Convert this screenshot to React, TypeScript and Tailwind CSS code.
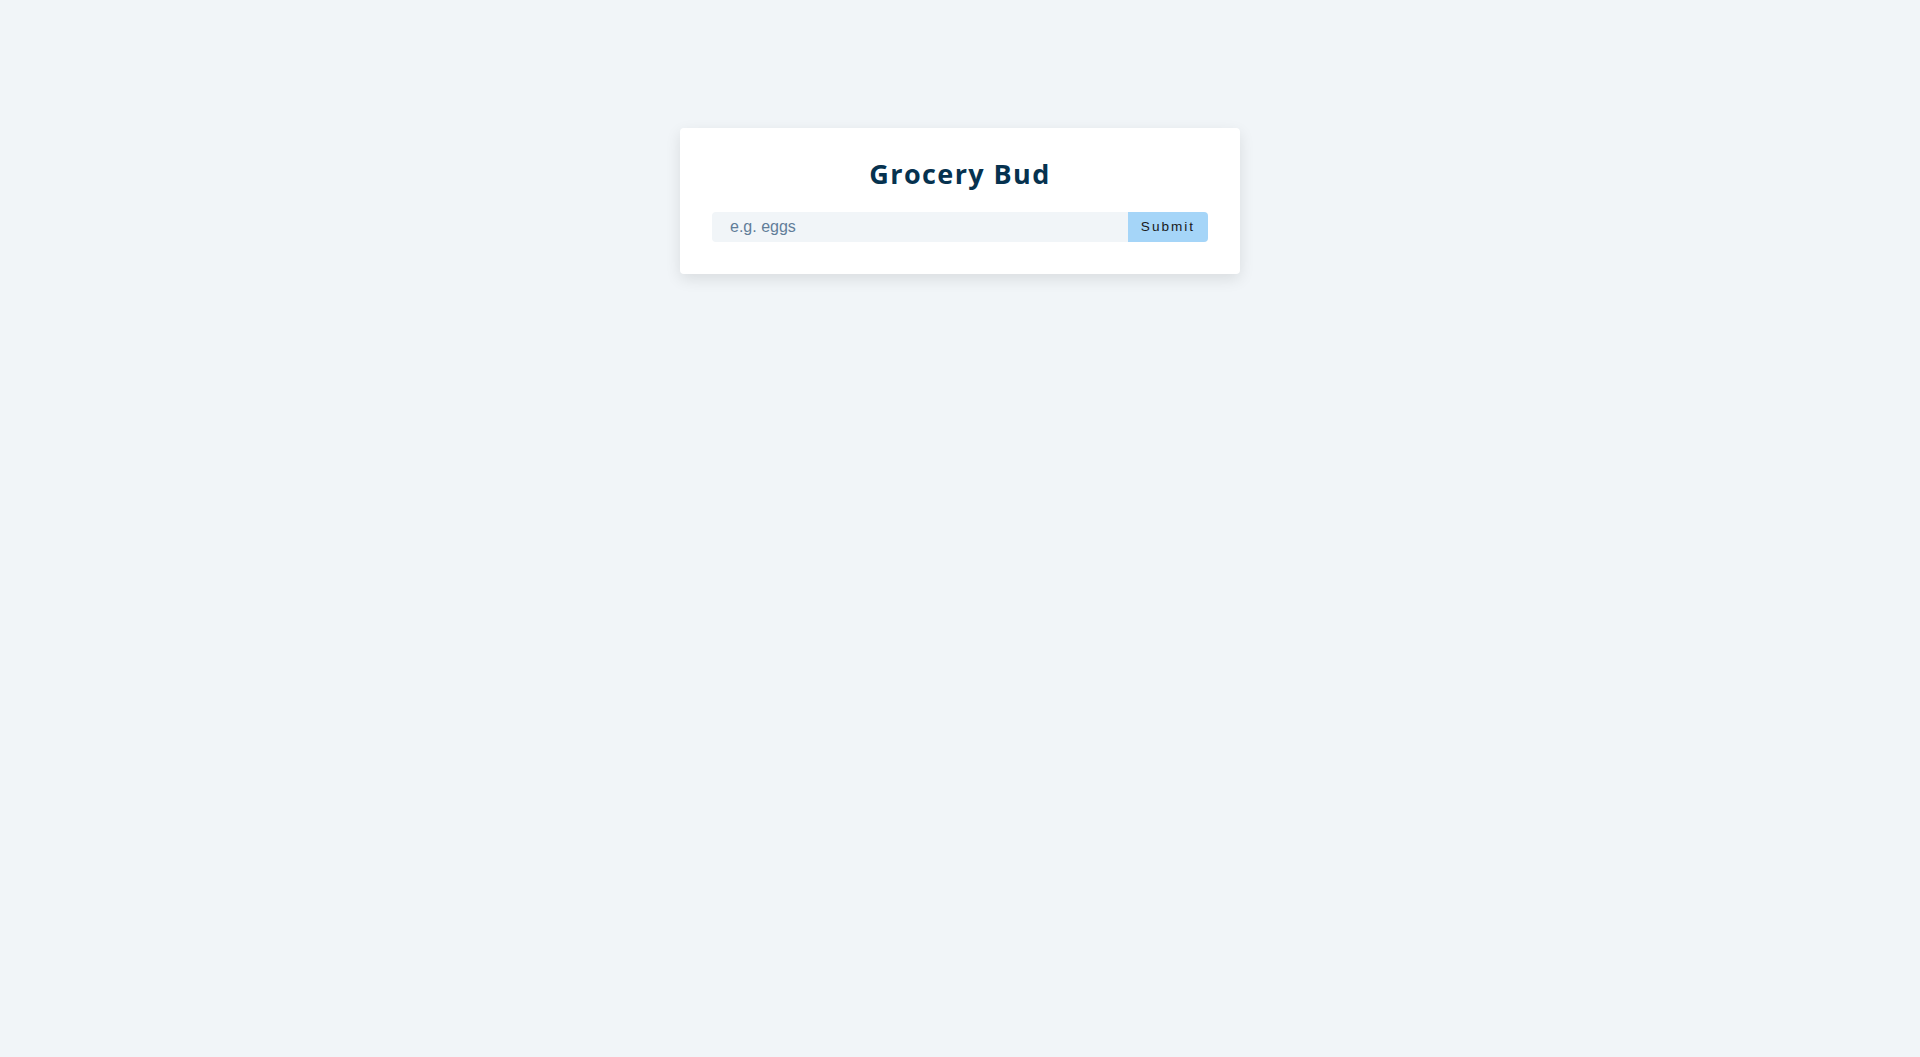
import { useState } from "react";

export default function App() {
  const [name, setName] = useState("");

  return (
    <main className="min-h-screen w-full bg-[#f1f5f8] pt-32">
      {/* Grocery card */}
      <section className="mx-auto w-[90vw] max-w-[560px] rounded bg-white p-8 shadow-[0_5px_15px_rgba(0,0,0,0.1)]">
        <form className="flex flex-col" onSubmit={(e) => e.preventDefault()}>
          <h3 className="mb-6 text-center font-['Open_Sans',sans-serif] text-[27px] leading-[28px] font-bold tracking-[1.4px] text-[#06324f]">
            Grocery Bud
          </h3>
          <div className="flex h-[30px] justify-center">
            <input
              type="text"
              value={name}
              onChange={(e) => setName(e.target.value)}
              placeholder="e.g. eggs"
              className="min-w-0 flex-1 rounded-l border-0 bg-[#f1f5f8] py-1 pl-[18px] font-['Liberation_Sans',Arial,sans-serif] text-base text-[#617d98] outline-none placeholder:text-[#617d98]"
            />
            <button
              type="submit"
              className="w-20 shrink-0 rounded-r bg-[#a5d5f8] p-1 font-['Liberation_Sans',Arial,sans-serif] text-[13.6px] tracking-[2px] text-[#1a1a1a]"
            >
              Submit
            </button>
          </div>
        </form>
      </section>
    </main>
  );
}
